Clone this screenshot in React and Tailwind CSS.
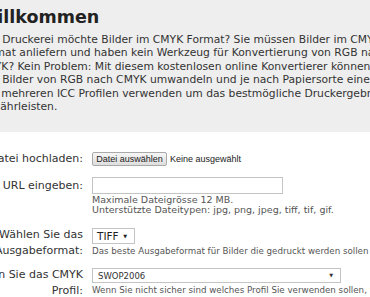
export default function App() {
  const intro = [
    'Ihre Druckerei möchte Bilder im CMYK Format? Sie müssen Bilder im CMYK',
    'Format anliefern und haben kein Werkzeug für Konvertierung von RGB nach',
    'CMYK? Kein Problem: Mit diesem kostenlosen online Konvertierer können Sie',
    'Ihre Bilder von RGB nach CMYK umwandeln und je nach Papiersorte eines',
    'von mehreren ICC Profilen verwenden um das bestmögliche Druckergebnis zu',
    'gewährleisten.',
  ]

  const label = 'w-[105px] shrink-0 flex flex-col items-end text-[11px] leading-[16px] text-[#333] whitespace-nowrap'

  return (
    <div className="w-[370px] h-[297px] overflow-hidden bg-white font-['DejaVu_Sans',Verdana,sans-serif]">
      <div className="ml-[-22px] w-[420px]">
        {/* Intro */}
        <div className="bg-[#eeeeee] pt-[7px] pb-[19px]">
          <h1 className="text-[17.5px] leading-[21px] font-bold text-[#222] whitespace-nowrap">Willkommen</h1>
          <div className="mt-[5px] text-[10.75px] leading-[13.4px] text-[#333]">
            {intro.map((line) => (
              <div key={line} className="whitespace-nowrap">{line}</div>
            ))}
          </div>
        </div>

        {/* Form */}
        <div className="pt-[19px] flex flex-col">
          <div className="flex items-center gap-[9px]">
            <div className={label}><span>Datei hochladen:</span></div>
            <div className="flex items-center gap-[3px] font-['Liberation_Sans',Arial,sans-serif] text-[9px] text-[#222]">
              <button type="button" className="h-[14px] w-[75px] leading-none border border-[#a9a9a9] rounded-[2px] bg-gradient-to-b from-[#f6f6f6] to-[#dedede]">
                Datei auswählen
              </button>
              <span>Keine ausgewählt</span>
            </div>
          </div>

          <div className="flex gap-[9px] mt-[10px]">
            <div className={`${label} pt-[1px]`}><span>oder URL eingeben:</span></div>
            <div className="flex flex-col">
              <input type="text" className="w-[191px] h-[17px] border border-[#c4c4c4] bg-white outline-none" />
              <div className="mt-[1px] text-[9.5px] leading-[10px] text-[#555] whitespace-nowrap">
                <div>Maximale Dateigrösse 12 MB.</div>
                <div>Unterstützte Dateitypen: jpg, png, jpeg, tiff, tif, gif.</div>
              </div>
            </div>
          </div>

          <div className="flex gap-[9px] mt-[13px]">
            <div className={`${label} mt-[-1px]`}>
              <span>Wählen Sie das</span>
              <span>Ausgabeformat:</span>
            </div>
            <div className="flex flex-col">
              <div className="w-[43px] h-[16px] border border-[#c4c4c4] bg-white flex items-center justify-between pl-[4px] pr-[7px] text-[10.5px] text-[#222]">
                <span>TIFF</span>
                <span className="text-[5px]">▼</span>
              </div>
              <div className="mt-[2px] text-[8.7px] leading-[11px] text-[#555] whitespace-nowrap">
                Das beste Ausgabeformat für Bilder die gedruckt werden sollen ist TIFF.
              </div>
            </div>
          </div>

          <div className="flex gap-[9px] mt-[9px]">
            <div className={`${label} mt-[-1px]`}>
              <span>Wählen Sie das CMYK</span>
              <span>Profil:</span>
            </div>
            <div className="flex flex-col">
              <div className="w-[249px] h-[15px] border border-[#c4c4c4] bg-white flex items-center justify-between pl-[5px] pr-[7px] text-[8.5px] text-[#333]">
                <span>SWOP2006</span>
                <span className="text-[5px]">▼</span>
              </div>
              <div className="mt-[2px] text-[8.7px] leading-[11px] text-[#555] whitespace-nowrap">
                Wenn Sie nicht sicher sind welches Profil Sie verwenden sollen, wählen Sie SWOP2006.
              </div>
            </div>
          </div>
        </div>
      </div>
    </div>
  )
}
